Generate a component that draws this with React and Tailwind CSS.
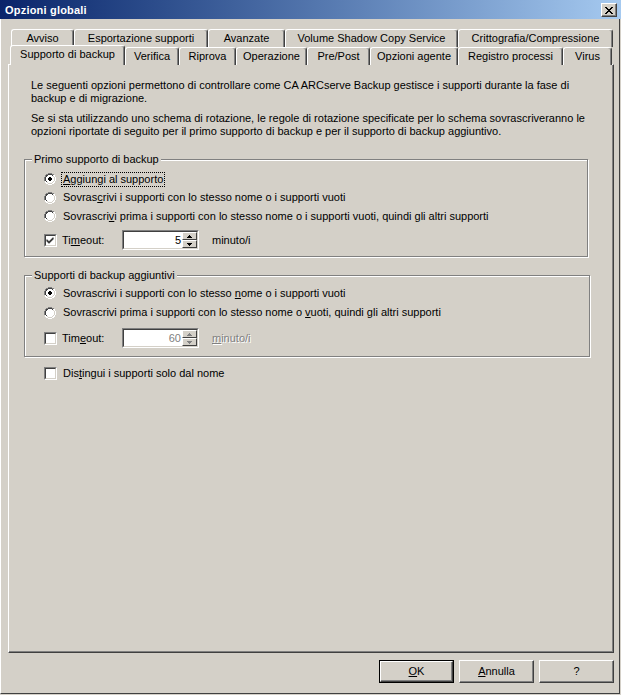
import React from "react";

const F = { fontFamily: '"Liberation Sans", Arial, sans-serif' };

function U({ children }) {
  return <span className="underline underline-offset-[1px]">{children}</span>;
}

function Radio({ checked }) {
  return (
    <svg width="12" height="12" viewBox="0 0 12 12" className="shrink-0">
      <path d="M4 0h4v1h2v1h1v2h1v4h-1v2h-1v1H8v1H4v-1H2v-1H1V8H0V4h1V2h1V1h2z" fill="#ffffff" />
      <path d="M4 0h4v1H4zM2 1h2v1H2zM8 1h2v1H8zM1 2h1v2H1zM0 4h1v4H0z" fill="#808080" />
      <path d="M4 1h4v1H4zM2 2h2v1H2zM8 2h1v1H8zM2 3h1v1H2zM1 4h1v4H1zM2 8h1v1H2z" fill="#404040" />
      <path d="M10 2h1v2h-1zM11 4h1v4h-1zM10 8h1v2h-1zM8 10h2v1H8zM2 10h2v1H2zM4 11h4v1H4z" fill="#ffffff" />
      <path d="M9 3h1v1H9zM10 4h1v4h-1zM9 8h1v1H9zM8 9h1v1H8zM3 9h1v1H3zM4 10h4v1H4z" fill="#d4d0c8" />
      <path d="M4 2h4v8H4zM3 3h6v6H3zM2 4h8v4H2z" fill="#ffffff" />
      {checked && <path d="M5 4h2v1h1v2H7v1H5V7H4V5h1z" fill="#000000" />}
    </svg>
  );
}

function Check({ checked }) {
  return (
    <div className="w-[13px] h-[13px] shrink-0 border-t border-l border-[#808080] border-r border-b border-r-white border-b-white">
      <div className="w-full h-full bg-white border-t border-l border-[#404040] border-r border-b border-r-[#d4d0c8] border-b-[#d4d0c8]">
        {checked && (
          <svg width="9" height="9" viewBox="0 0 9 9" className="block">
            <path d="M1 3h1v1h1v1h1V4h1V3h1V2h1V1h1v2H7v1H6v1H5v1H4v1H3V6H2V5H1z" fill="#000" transform="translate(-0.5 0.5)" />
          </svg>
        )}
      </div>
    </div>
  );
}

function Spin({ value, disabled }) {
  return (
    <div className="w-[77px] h-[20px] border-t border-l border-[#808080] border-r border-b border-r-white border-b-white">
      <div className="w-full h-full bg-white border-t border-l border-[#404040] border-r border-b border-r-[#d4d0c8] border-b-[#d4d0c8] flex items-stretch">
        <div className={"flex-1 text-right pr-[1px] leading-[16px] text-[11px] " + (disabled ? "text-[#808080]" : "text-black")}>
          {value}
        </div>
        <div className="w-[15px] flex flex-col">
          {[0, 1].map((i) => (
            <div key={i} className="flex-1 bg-[#d4d0c8] border-t border-l border-white border-r border-b border-r-[#404040] border-b-[#404040] flex items-center justify-center">
              <svg width="5" height="3" viewBox="0 0 5 3">
                {i === 0 ? (
                  <path d="M2 0h1v1h1v1h1v1H0V2h1V1h1z" fill={disabled ? "#808080" : "#000"} />
                ) : (
                  <path d="M0 0h5v1H4v1H3v1H2V2H1V1H0z" fill={disabled ? "#808080" : "#000"} />
                )}
              </svg>
            </div>
          ))}
        </div>
      </div>
    </div>
  );
}

function Tab({ w, children, selected }) {
  return (
    <div
      className={
        "shrink-0 flex items-center justify-center border-t border-l border-white rounded-tl-[3px] rounded-tr-[3px] border-r border-r-[#404040] shadow-[inset_-1px_0_0_#808080] bg-[#d4d0c8] text-[11px] text-black " +
        (selected ? "h-[20px] relative z-10 -mt-[2px] pb-[2px]" : "h-[18px]")
      }
      style={{ width: w }}
    >
      {children}
    </div>
  );
}

function Group({ title, className, children }) {
  return (
    <div className={"relative border border-[#808080] shadow-[inset_1px_1px_0_#fff,1px_1px_0_#fff] " + className}>
      <div className="absolute -top-[8px] left-[7px] bg-[#d4d0c8] px-[2px] text-[11px] leading-[14px] text-black">{title}</div>
      {children}
    </div>
  );
}

function Btn({ children, def }) {
  return (
    <div className={"w-[75px] h-[23px] " + (def ? "border border-black" : "")}>
      <div className="w-full h-full border-t border-l border-white border-r border-b border-r-[#404040] border-b-[#404040] shadow-[inset_-1px_-1px_0_#808080] flex items-center justify-center text-[11px] text-black">
        {children}
      </div>
    </div>
  );
}

export default function App() {
  return (
    <div className="w-[621px] h-[695px] bg-[#d4d0c8] flex flex-col overflow-hidden" style={F}>
      <div className="h-[19px] shrink-0 bg-gradient-to-r from-[#0a246a] to-[#a6caf0] flex items-center justify-between pl-[5px] pr-[4px]">
        <span className="text-white font-bold text-[11px] tracking-[0.2px] leading-[14px]">Opzioni globali</span>
        <div className="w-[16px] h-[14px] bg-[#d4d0c8] border-t border-l border-white border-r border-b border-r-[#404040] border-b-[#404040] shadow-[inset_-1px_-1px_0_#808080] flex items-center justify-center mt-[1px]">
          <svg width="8" height="7" viewBox="0 0 8 7">
            <path d="M0 0h2v1h1v1h2V1h1V0h2v1H7v1H6v1H5v1h1v1h1v1h1v1H6V6H5V5H3v1H2v1H0V6h1V5h1V4h1V3H2V2H1V1H0z" fill="#000" />
          </svg>
        </div>
      </div>
      <div className="flex-1 flex flex-col border-l border-white border-b border-b-[#404040] border-r border-r-[#404040] mb-[1px] mr-[1px] pl-[7px] pr-[5px]">
        <div className="pt-[10px] pl-[3px] flex">
          <Tab w={63}>Avviso</Tab>
          <Tab w={134}>Esportazione supporti</Tab>
          <Tab w={77}>Avanzate</Tab>
          <Tab w={173}>Volume Shadow Copy Service</Tab>
          <Tab w={155}>Crittografia/Compressione</Tab>
        </div>
        <div className="pl-[2px] flex items-end relative z-10 -mb-[1px]">
          <Tab w={115} selected>Supporto di backup</Tab>
          <Tab w={54}>Verifica</Tab>
          <Tab w={57}>Riprova</Tab>
          <Tab w={71}>Operazione</Tab>
          <Tab w={63}>Pre/Post</Tab>
          <Tab w={88}>Opzioni agente</Tab>
          <Tab w={105}>Registro processi</Tab>
          <Tab w={49}>Virus</Tab>
        </div>
        <div className="h-[589px] border-t border-l border-white border-r border-b border-r-[#404040] border-b-[#404040] shadow-[inset_-1px_-1px_0_#808080] text-[11px] leading-[13px] text-black">
          <div className="pl-[22px] pr-[4px] pt-[14px] whitespace-nowrap">
            <p>Le seguenti opzioni permettono di controllare come CA ARCserve Backup gestisce i supporti durante la fase di<br />backup e di migrazione.</p>
            <p className="mt-[7px]">Se si sta utilizzando uno schema di rotazione, le regole di rotazione specificate per lo schema sovrascriveranno le<br />opzioni riportate di seguito per il primo supporto di backup e per il supporto di backup aggiuntivo.</p>
          </div>
          <Group title="Primo supporto di backup" className="ml-[15px] w-[564px] h-[98px] mt-[21px] pt-[10px]">
            <div className="pl-[19px] flex flex-col">
              <div className="h-[18px] flex items-center gap-[6px]">
                <Radio checked />
                <span className="outline-1 outline-dotted outline-black px-[1px] leading-[13px]"><U>A</U>ggiungi al supporto</span>
              </div>
              <div className="h-[19px] flex items-center gap-[6px]">
                <Radio />
                <span className="px-[1px]">Sovras<U>c</U>rivi i supporti con lo stesso nome o i supporti vuoti</span>
              </div>
              <div className="h-[18px] flex items-center gap-[6px]">
                <Radio />
                <span className="px-[1px]">Sovrascri<U>v</U>i prima i supporti con lo stesso nome o i supporti vuoti, quindi gli altri supporti</span>
              </div>
              <div className="h-[20px] mt-[5px] flex items-center">
                <Check checked />
                <span className="ml-[5px] w-[60px]">Ti<U>m</U>eout:</span>
                <Spin value="5" />
                <span className="ml-[13px]">minuto/i</span>
              </div>
            </div>
          </Group>
          <Group title="Supporti di backup aggiuntivi" className="ml-[15px] w-[566px] h-[82px] mt-[18px] pt-[8px]">
            <div className="pl-[19px] flex flex-col">
              <div className="h-[18px] flex items-center gap-[6px]">
                <Radio checked />
                <span className="px-[1px]">Sovrascrivi i supporti con lo stesso <U>n</U>ome o i supporti vuoti</span>
              </div>
              <div className="h-[19px] mt-[1px] flex items-center gap-[6px]">
                <Radio />
                <span className="px-[1px]">Sovrascrivi prima i supporti con lo stesso nome o <U>v</U>uoti, quindi gli altri supporti</span>
              </div>
              <div className="h-[20px] mt-[6px] flex items-center">
                <Check />
                <span className="ml-[5px] w-[60px]">Tim<U>e</U>out:</span>
                <Spin value="60" disabled />
                <span className="ml-[13px] text-[#808080] [text-shadow:1px_1px_0_#fff]"><U>m</U>inuto/i</span>
              </div>
            </div>
          </Group>
          <div className="ml-[35px] mt-[9px] h-[14px] flex items-center">
            <Check />
            <span className="ml-[6px]">Dis<U>t</U>ingui i supporti solo dal nome</span>
          </div>
        </div>
        <div className="flex justify-end gap-[5px] mt-[7px] pr-[0px]">
          <Btn def><U>O</U>K</Btn>
          <Btn><U>A</U>nnulla</Btn>
          <Btn>?</Btn>
        </div>
      </div>
    </div>
  );
}
